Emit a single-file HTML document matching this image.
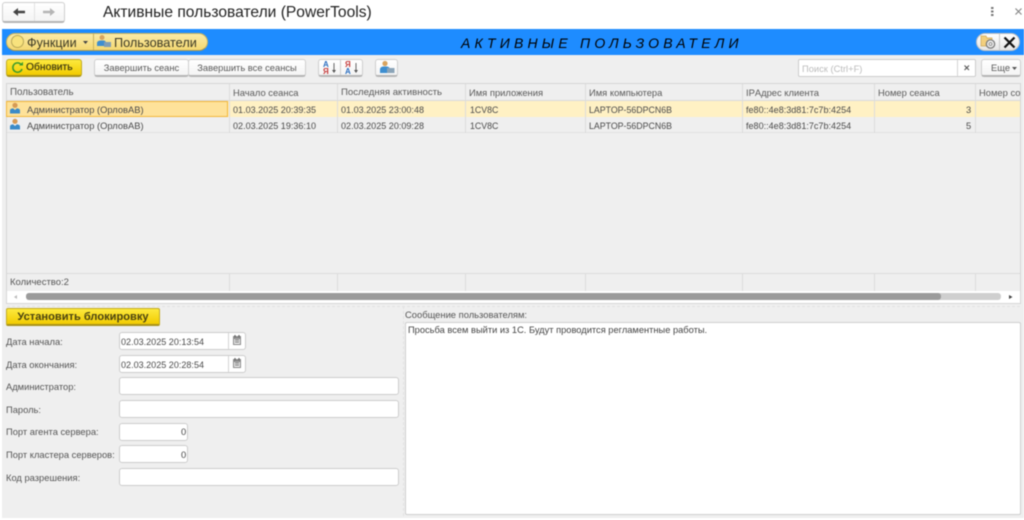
<!DOCTYPE html>
<html lang="ru"><head><meta charset="utf-8"><title>Активные пользователи</title>
<style>
html,body{margin:0;padding:0;background:#fff;}
#p{position:relative;width:1024px;height:520px;overflow:hidden;background:#fff;font:9.35px/14px "Liberation Sans",sans-serif;color:#4a4a4a;filter:blur(.4px);}
#p div,#p svg{position:absolute;box-sizing:border-box;white-space:nowrap;}
.b{background:linear-gradient(#fff,#f4f4f4);border:1px solid #cfcfcf;border-bottom:2px solid #b5b5b5;border-radius:3px;text-align:center;color:#5a5a5a;line-height:16px;}
.f{background:#fff;border:1px solid #cdcdcd;border-radius:3px;}
.l{left:6px;color:#555;}
.sep{width:1px;background:#dcdcdc;}
.c{color:#4a4a4a;}
.d{color:#4a4a4a;font-size:9.050px;}
.a{color:#4a4a4a;font-size:8.800px;}
.h{top:86px;color:#5a5a5a;font-size:9.400px;line-height:14px;}
</style></head><body><div id="p">

<div class="b" style="left:2px;top:2px;width:63px;height:21px;border-radius:3px"></div>
<div style="left:34px;top:3px;width:1px;height:18px;background:#e2e2e2"></div>
<svg style="left:12px;top:6px" width="14" height="12" viewBox="0 0 14 12"><path d="M1 6L6 2V4.800H13V7.200H6V10Z" fill="#444"/></svg>
<svg style="left:42px;top:6px" width="14" height="12" viewBox="0 0 14 12"><path d="M13 6L8 2V4.800H1V7.200H8V10Z" fill="#b5b5b5"/></svg>
<div style="left:103px;top:3px;font-size:15.600px;line-height:19px;color:#222">Активные пользователи (PowerTools)</div>
<svg style="left:990px;top:6px" width="5" height="11"><rect x="1" y="1" width="2.500" height="2" fill="#777"/><rect x="1" y="4.500" width="2.500" height="2" fill="#777"/><rect x="1" y="8" width="2.500" height="2" fill="#777"/></svg>
<svg style="left:1014px;top:7px" width="9" height="9"><path d="M1.500 1.500L7.500 7.500M7.500 1.500L1.500 7.500" stroke="#888" stroke-width="1.200"/></svg>

<div style="left:2px;top:29px;width:1022px;height:26px;background:#1e8cff"></div>
<div style="left:6px;top:33px;width:202px;height:18px;border-radius:9px;background:linear-gradient(#fbeaa6,#f4d871);border:1px solid #c9b25d;border-bottom:1px solid #a89550"></div>
<div style="left:93px;top:34px;width:1px;height:16px;background:#c9b25d"></div>
<div style="left:11px;top:35px;width:13px;height:13px;border-radius:50%;background:#f8e27d;border:1px solid #b9a755"></div>
<div style="left:27px;top:36px;font-size:12.600px;line-height:14px;color:#3d3a25">Функции</div>
<svg style="left:82px;top:41px" width="7" height="4"><path d="M1 0H6L3.500 3Z" fill="#444"/></svg>
<svg style="left:97px;top:34px" width="14" height="15" viewBox="0 0 14 15"><circle cx="5" cy="3.500" r="2.500" fill="#d9a45f"/><path d="M0 12V9Q0 7 3 6.500H7Q9 7 9 9V12Z" fill="#3d8ed0"/><rect x="7" y="8" width="7" height="5" fill="#7f9db5"/></svg>
<div style="left:114px;top:36px;font-size:12.700px;line-height:14px;color:#3d3a25">Пользователи</div>
<div style="left:461px;top:35px;font-size:14px;line-height:16px;font-style:italic;color:#000;letter-spacing:4.200px">АКТИВНЫЕ ПОЛЬЗОВАТЕЛИ</div>
<div style="left:976px;top:33px;width:44px;height:18px;border-radius:9px;background:linear-gradient(#fff,#e6e6e6);border:1px solid #c0c0c0"></div>
<div style="left:999px;top:34px;width:1px;height:16px;background:#c8c8c8"></div>
<svg style="left:980px;top:34px" width="16" height="16" viewBox="0 0 16 16"><path d="M1 2H6L7 4H12V12H1Z" fill="#f2cf7e" stroke="#cda655" stroke-width=".7"/><circle cx="10.500" cy="10" r="4.200" fill="#e8e8e8" stroke="#777" stroke-width="1.200"/><circle cx="10.500" cy="10" r="1.400" fill="#fff" stroke="#777" stroke-width=".7"/></svg>
<svg style="left:1003px;top:36px" width="13" height="13"><path d="M1.500 1.500L11.500 11.500M11.500 1.500L1.500 11.500" stroke="#111" stroke-width="2.200"/></svg>

<div style="left:2px;top:55px;width:1022px;height:463px;background:#efefef"></div>

<div style="left:6px;top:59px;width:76px;height:18px;background:linear-gradient(#fdea3e,#f2cc00);border:1px solid #c2ab20;border-bottom:2px solid #a8921a;border-radius:3px"></div>
<svg style="left:11px;top:61px" width="13" height="13" viewBox="0 0 13 13"><path d="M10.500 4A4.700 4.700 0 1 0 11 8" fill="none" stroke="#3a9a2c" stroke-width="1.500"/><path d="M8 4.500H12V.8Z" fill="#3a9a2c"/></svg>
<div style="left:26px;top:61px;font-size:10.300px;color:#3f3a10;-webkit-text-stroke:.2px #3f3a10">Обновить</div>

<div class="b" style="left:94px;top:59px;width:95px;height:18px">Завершить сеанс</div>
<div class="b" style="left:188px;top:59px;width:118px;height:18px">Завершить все сеансы</div>

<div class="b" style="left:318px;top:59px;width:45px;height:18px"></div>
<div style="left:340px;top:60px;width:1px;height:15px;background:#ccc"></div>
<svg style="left:322px;top:60px" width="16" height="16" viewBox="0 0 16 16"><text x="1" y="7" font-family="Liberation Sans" font-size="8" font-weight="bold" fill="#2c6fc0">А</text><text x="1" y="14" font-family="Liberation Sans" font-size="8" font-weight="bold" fill="#c43a3a">Я</text><path d="M12 3V11" stroke="#666"/><path d="M10 10H14L12 13Z" fill="#555"/></svg>
<svg style="left:344px;top:60px" width="16" height="16" viewBox="0 0 16 16"><text x="1" y="7" font-family="Liberation Sans" font-size="8" font-weight="bold" fill="#c43a3a">Я</text><text x="1" y="14" font-family="Liberation Sans" font-size="8" font-weight="bold" fill="#2c6fc0">А</text><path d="M12 3V11" stroke="#666"/><path d="M10 10H14L12 13Z" fill="#555"/></svg>
<div class="b" style="left:375px;top:59px;width:23px;height:18px"></div>
<svg style="left:379px;top:60px" width="16" height="15" viewBox="0 0 16 15"><circle cx="6" cy="3.500" r="2.600" fill="#d9a45f"/><path d="M1 13V9.500Q1 7 4 6.500H8Q11 7 11 9.500V13Z" fill="#3d8ed0"/><rect x="8" y="8" width="7.500" height="5" fill="#8ba4b8"/></svg>

<div class="f" style="left:798px;top:59px;width:178px;height:18px;border-radius:2px"></div>
<div style="left:957px;top:60px;width:1px;height:16px;background:#d5d5d5"></div>
<div style="left:802px;top:62px;color:#bcbcbc">Поиск (Ctrl+F)</div>
<svg style="left:963px;top:64px" width="8" height="8"><path d="M1.500 1.500L6 6M6 1.500L1.500 6" stroke="#555" stroke-width="1.100"/></svg>
<div class="b" style="left:981px;top:59px;width:40px;height:18px;text-align:left;padding-left:9px">Еще</div>
<svg style="left:1012px;top:67px" width="6" height="4"><path d="M0 0H5L2.500 3Z" fill="#555"/></svg>

<div style="left:6px;top:83px;width:1015px;height:221px;background:#efefef;border:1px solid #d6d6d6"></div>
<div style="left:7px;top:84px;width:1013px;height:17px;background:#efefef;border-bottom:1px solid #dadada"></div>
<div style="left:7px;top:101px;width:1013px;height:16px;background:#fff1c4"></div>
<div style="left:7px;top:117px;width:1013px;height:16px;background:#efefef;border-bottom:1px solid #e2e2e2"></div>
<div style="left:6px;top:101px;width:222px;height:16px;background:#fee29a;border:1px solid #f2b73a"></div>

<div class="sep" style="left:229px;top:84px;height:49px"></div>
<div class="sep" style="left:337px;top:84px;height:49px"></div>
<div class="sep" style="left:465px;top:84px;height:49px"></div>
<div class="sep" style="left:585px;top:84px;height:49px"></div>
<div class="sep" style="left:742px;top:84px;height:49px"></div>
<div class="sep" style="left:874px;top:84px;height:49px"></div>
<div class="sep" style="left:975px;top:84px;height:49px"></div>

<div class="h" style="left:10px;font-size:9.800px">Пользователь</div>
<div class="h" style="left:233px">Начало сеанса</div>
<div class="h" style="left:341px;font-size:9.600px">Последняя активность</div>
<div class="h" style="left:469px">Имя приложения</div>
<div class="h" style="left:589px">Имя компьютера</div>
<div class="h" style="left:746px">IPАдрес клиента</div>
<div class="h" style="left:878px">Номер сеанса</div>
<div class="h" style="left:979px;width:41px;overflow:hidden">Номер соединения</div>

<svg style="left:9px;top:102px" width="12" height="13" viewBox="0 0 12 13"><circle cx="6" cy="3.300" r="2.600" fill="#d59a55"/><path d="M1 11.500V8.500Q1 6.800 4 6.300L6 8L8 6.300Q11 6.800 11 8.500V11.500Z" fill="#3a8bc8"/></svg>
<svg style="left:9px;top:118px" width="12" height="13" viewBox="0 0 12 13"><circle cx="6" cy="3.300" r="2.600" fill="#d59a55"/><path d="M1 11.500V8.500Q1 6.800 4 6.300L6 8L8 6.300Q11 6.800 11 8.500V11.500Z" fill="#3a8bc8"/></svg>

<div class="c" style="left:27px;top:103px">Администратор (ОрловАВ)</div>
<div class="d" style="left:233px;top:103px">01.03.2025 20:39:35</div>
<div class="d" style="left:341px;top:103px">01.03.2025 23:00:48</div>
<div class="a" style="left:470px;top:103px">1CV8C</div>
<div class="a" style="left:589px;top:103px">LAPTOP-56DPCN6B</div>
<div class="d" style="left:746px;top:103px">fe80::4e8:3d81:7c7b:4254</div>
<div class="c" style="left:966px;top:103px">3</div>

<div class="c" style="left:27px;top:119px">Администратор (ОрловАВ)</div>
<div class="d" style="left:233px;top:119px">02.03.2025 19:36:10</div>
<div class="d" style="left:341px;top:119px">02.03.2025 20:09:28</div>
<div class="a" style="left:470px;top:119px">1CV8C</div>
<div class="a" style="left:589px;top:119px">LAPTOP-56DPCN6B</div>
<div class="d" style="left:746px;top:119px">fe80::4e8:3d81:7c7b:4254</div>
<div class="c" style="left:966px;top:119px">5</div>

<div style="left:7px;top:273px;width:1013px;height:18px;background:#efefef;border-top:1px solid #dcdcdc"></div>
<div class="sep" style="left:229px;top:274px;height:17px"></div>
<div class="sep" style="left:337px;top:274px;height:17px"></div>
<div class="sep" style="left:465px;top:274px;height:17px"></div>
<div class="sep" style="left:585px;top:274px;height:17px"></div>
<div class="sep" style="left:742px;top:274px;height:17px"></div>
<div class="sep" style="left:874px;top:274px;height:17px"></div>
<div class="sep" style="left:975px;top:274px;height:17px"></div>
<div style="left:10px;top:276px;color:#555;font-size:9.500px">Количество:2</div>
<div style="left:7px;top:291px;width:1013px;height:12px;background:#fff"></div>
<svg style="left:13px;top:294px" width="6" height="6"><path d="M4 1V5L1 3Z" fill="#bbb"/></svg>
<div style="left:26px;top:293px;width:975px;height:7px;background:#cfcfcf;border-radius:3px"></div>
<div style="left:26px;top:293px;width:915px;height:7px;background:#9b9b9b;border-radius:3px"></div>
<svg style="left:1008px;top:294px" width="6" height="6"><path d="M1 1V5L4.500 3Z" fill="#444"/></svg>

<div style="left:6px;top:308px;width:154px;height:18px;background:linear-gradient(#fdea3e,#f2cc00);border:1px solid #c2ab20;border-bottom:2px solid #a8921a;border-radius:2px;text-align:center;font-size:11.100px;line-height:16px;font-weight:bold;color:#4a4310">Установить блокировку</div>

<div class="l" style="top:335px">Дата начала:</div>
<div class="f" style="left:119px;top:332px;width:127px;height:18px"></div>
<div style="left:228px;top:333px;width:1px;height:16px;background:#d5d5d5"></div>
<div class="d" style="left:121px;top:335px">02.03.2025 20:13:54</div>
<svg style="left:232px;top:334px" width="10" height="12"><rect x="1" y="2" width="8" height="9" fill="#8a8a8a"/><rect x="2" y="5" width="6" height="5" fill="#e8e8e8"/><path d="M3 1V3M7 1V3" stroke="#555"/><path d="M3 6H7M3 8H7" stroke="#777"/></svg>

<div class="l" style="top:358px">Дата окончания:</div>
<div class="f" style="left:119px;top:355px;width:127px;height:18px"></div>
<div style="left:228px;top:356px;width:1px;height:16px;background:#d5d5d5"></div>
<div class="d" style="left:121px;top:358px">02.03.2025 20:28:54</div>
<svg style="left:232px;top:357px" width="10" height="12"><rect x="1" y="2" width="8" height="9" fill="#8a8a8a"/><rect x="2" y="5" width="6" height="5" fill="#e8e8e8"/><path d="M3 1V3M7 1V3" stroke="#555"/><path d="M3 6H7M3 8H7" stroke="#777"/></svg>

<div class="l" style="top:380px">Администратор:</div>
<div class="f" style="left:119px;top:377px;width:280px;height:18px"></div>
<div class="l" style="top:403px">Пароль:</div>
<div class="f" style="left:119px;top:400px;width:280px;height:18px"></div>
<div class="l" style="top:425px">Порт агента сервера:</div>
<div class="f" style="left:119px;top:423px;width:69px;height:18px"></div>
<div style="left:181px;top:425px;color:#444">0</div>
<div class="l" style="top:448px">Порт кластера серверов:</div>
<div class="f" style="left:119px;top:445px;width:69px;height:18px"></div>
<div style="left:181px;top:448px;color:#444">0</div>
<div class="l" style="top:471px">Код разрешения:</div>
<div class="f" style="left:119px;top:468px;width:280px;height:18px"></div>

<div style="left:7px;top:306px;width:1013px;height:0;border-top:1px dashed #e2e2e2"></div>
<div style="left:403px;top:306px;width:0;height:210px;border-left:1px dashed #e2e2e2"></div>

<div style="left:405px;top:308px;color:#555;font-size:9.400px">Сообщение пользователям:</div>
<div style="left:405px;top:322px;width:616px;height:193px;background:#fff;border:1px solid #cfcfcf;border-radius:2px"></div>
<div style="left:408px;top:323px;color:#444;font-size:9.300px">Просьба всем выйти из 1С. Будут проводится регламентные работы.</div>

</div></body></html>
